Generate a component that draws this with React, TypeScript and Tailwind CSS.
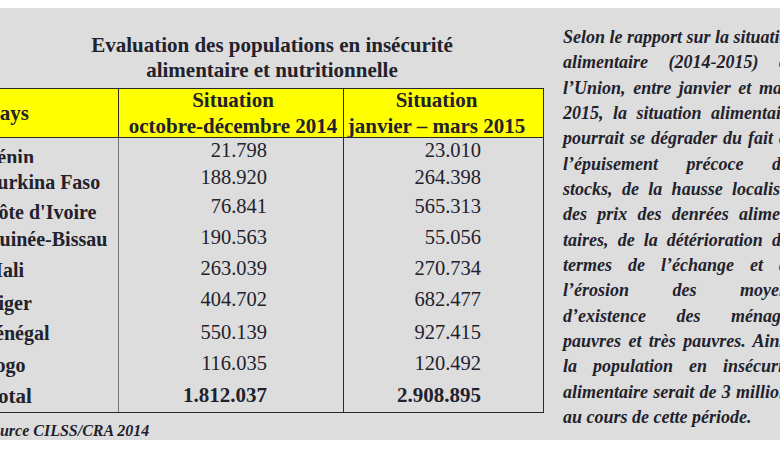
import React from 'react';

const rows = [
  { name: 'Bénin', a: '21.798', b: '23.010', h: 'h-[25px]', shift: 'translate-y-[6px]' },
  { name: 'Burkina Faso', a: '188.920', b: '264.398', h: 'h-[28px]', shift: 'translate-y-[5px]' },
  { name: "Côte d'Ivoire", a: '76.841', b: '565.313', h: 'h-[31px]', shift: 'translate-y-[5px]' },
  { name: 'Guinée-Bissau', a: '190.563', b: '55.056', h: 'h-[31px]', shift: 'translate-y-[1px]' },
  { name: 'Mali', a: '263.039', b: '270.734', h: 'h-[30px]', shift: 'translate-y-[2px]' },
  { name: 'Niger', a: '404.702', b: '682.477', h: 'h-[33px]', shift: 'translate-y-[3px]' },
  { name: 'Sénégal', a: '550.139', b: '927.415', h: 'h-[32px]', shift: 'translate-y-[1px]' },
  { name: 'Togo', a: '116.035', b: '120.492', h: 'h-[31px]', shift: 'translate-y-[1px]' },
];

const lines = [
  'Selon le rapport sur la situation',
  'alimentaire (2014-2015) de',
  'l’Union, entre janvier et mars',
  '2015, la situation alimentaire',
  'pourrait se dégrader du fait de',
  'l’épuisement précoce des',
  'stocks, de la hausse localisée',
  'des prix des denrées alimen-',
  'taires, de la détérioration des',
  'termes de l’échange et de',
  'l’érosion des moyens',
  'd’existence des ménages',
  'pauvres et très pauvres. Ainsi,',
  'la population en insécurité',
  'alimentaire serait de 3 millions',
];

export default function App() {
  return (
    <div className="w-[780px] h-[470px] bg-white overflow-hidden font-['Liberation_Serif','Times_New_Roman',serif] text-[#22222c]">
      <div className="mt-2 h-[432px] bg-[#dddddd] flex overflow-hidden">
        {/* table block */}
        <div className="-ml-[14px] w-[558px] shrink-0">
          <div className="pl-[14px] pt-[25px] text-center text-[21px] font-bold leading-[25px]">
            <div>Evaluation des populations en insécurité</div>
            <div>alimentaire et nutritionnelle</div>
          </div>

          <div className="mt-[5px] border-y border-r border-[#2a2a2a]">
            <div className="flex h-[49px] bg-[#ffff00] border-b border-[#2a2a2a] text-[21px] font-bold leading-[26px]">
              <div className="w-[133px] shrink-0 border-r border-[#2a2a2a] pl-[1px] flex items-center">Pays</div>
              <div className="w-[225px] shrink-0 border-r border-[#2a2a2a] flex flex-col justify-center items-center pl-[4px]">
                <span>Situation</span>
                <span>octobre-décembre 2014</span>
              </div>
              <div className="flex-1 flex flex-col justify-center items-center pr-[14px] whitespace-nowrap">
                <span>Situation</span>
                <span>janvier – mars 2015</span>
              </div>
            </div>

            {rows.map((r) => (
              <div key={r.name} className={`flex ${r.h}`}>
                <div className="w-[133px] shrink-0 border-r border-[#777] -indent-[2px] flex items-center text-[20px] font-bold whitespace-nowrap overflow-hidden">
                  <span className={r.shift}>{r.name}</span>
                </div>
                <div className="w-[225px] shrink-0 border-r border-[#2a2a2a] pr-[76px] flex items-center justify-end text-[20.5px]">
                  {r.a}
                </div>
                <div className="flex-1 pr-[62px] flex items-center justify-end text-[20.5px]">{r.b}</div>
              </div>
            ))}
            <div className="flex h-[33px] font-bold text-[21px]">
              <div className="w-[133px] shrink-0 border-r border-[#777] flex items-center">
                <span className="translate-y-[1px]">Total</span>
              </div>
              <div className="w-[225px] shrink-0 border-r border-[#2a2a2a] pr-[76px] flex items-center justify-end">
                1.812.037
              </div>
              <div className="flex-1 pr-[62px] flex items-center justify-end">2.908.895</div>
            </div>
          </div>

          <div className="-ml-[3px] mt-[8px] text-[16px] font-bold italic leading-[20px]">Source CILSS/CRA 2014</div>
        </div>

        {/* commentary */}
        <div className="ml-[19px] w-[233px] shrink-0 pt-[17px] text-[18px] font-bold italic leading-[25.33px] whitespace-nowrap">
          {lines.map((l) => (
            <div key={l} className="text-justify [text-align-last:justify]">
              {l}
            </div>
          ))}
          <div>au cours de cette période.</div>
        </div>
      </div>
    </div>
  );
}
